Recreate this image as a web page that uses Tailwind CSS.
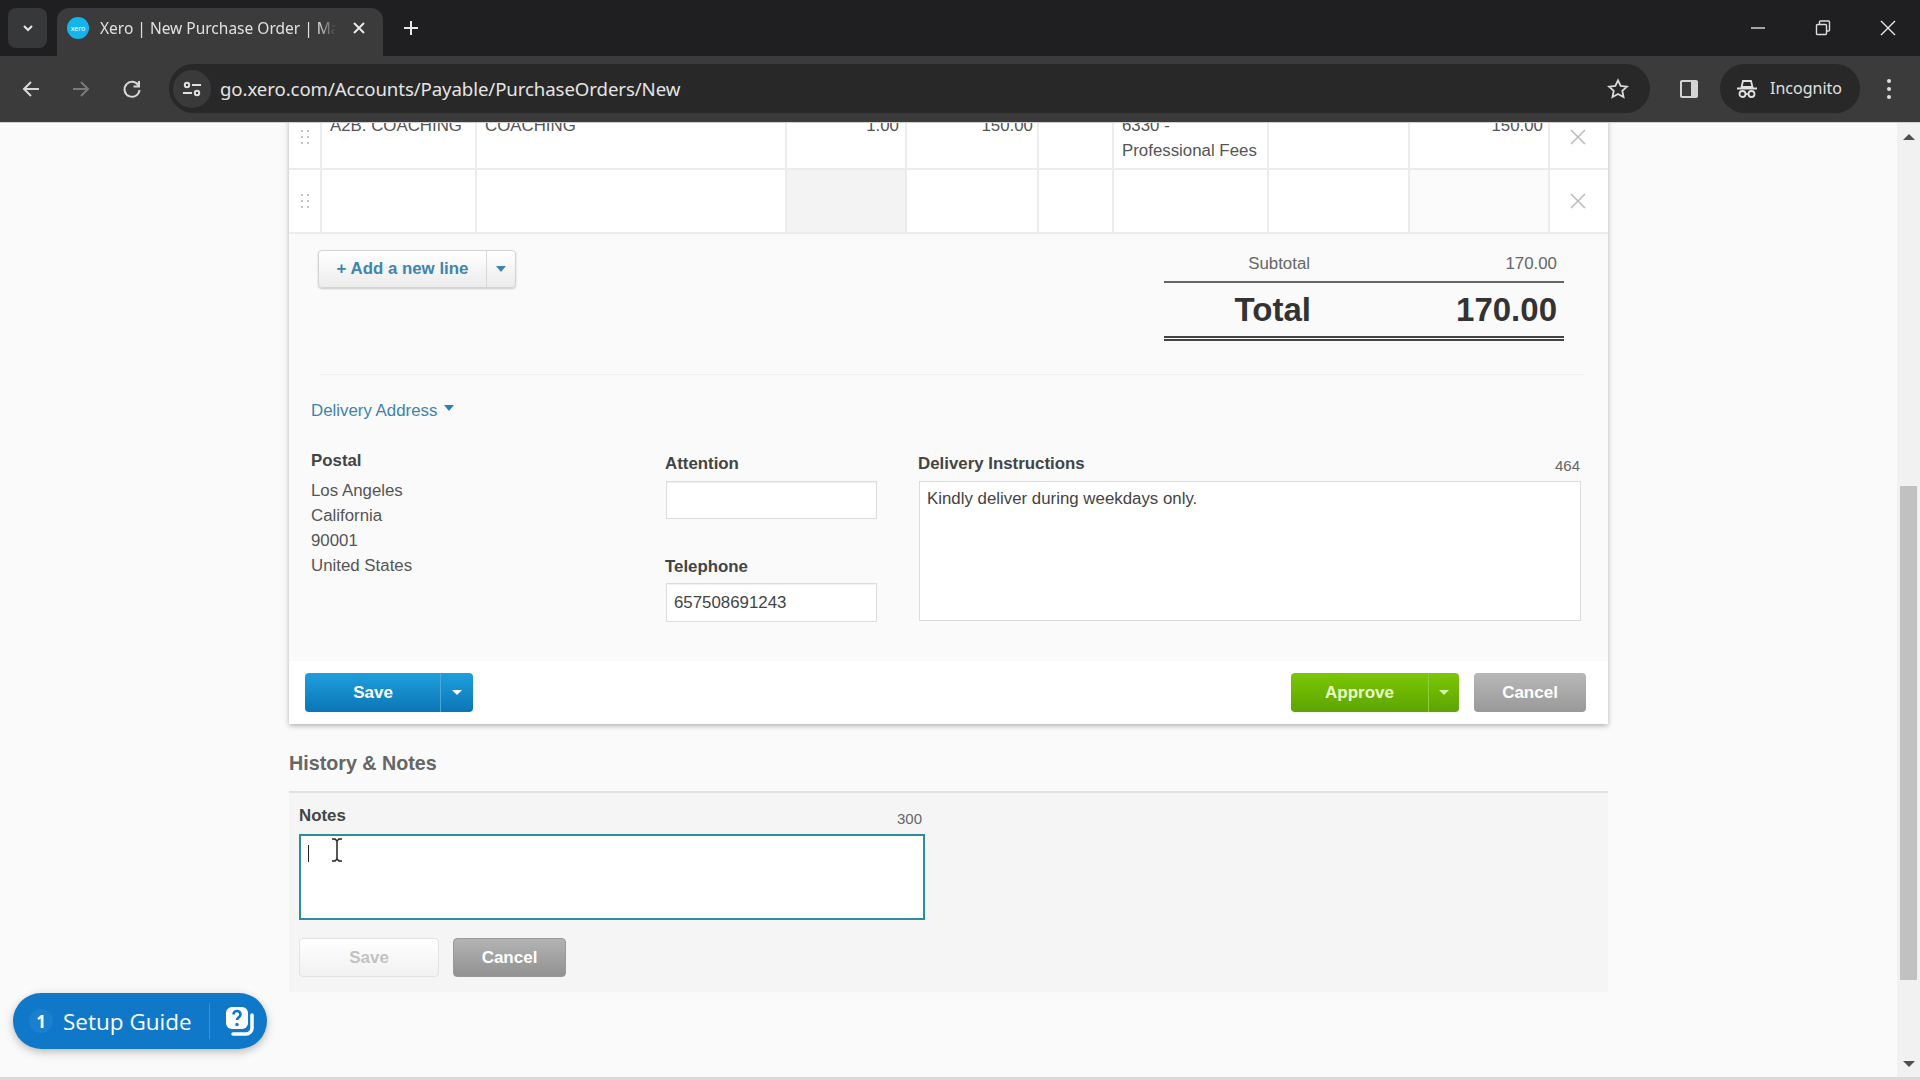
<!DOCTYPE html>
<html lang="en">
<head>
    <meta charset="utf-8"/>
    <title>Xero | New Purchase Order</title>
    <script src="https://cdn.jsdelivr.net/npm/@tailwindcss/browser@4"></script>
</head>
<body class="w-[1920px] h-[1080px] overflow-hidden flex flex-col bg-[#fafafa] text-[16.85px] leading-[25px] text-[#555] font-['Liberation_Sans',Arial,sans-serif]">

    <!-- Tab strip -->
    <div class="h-14 bg-[#1f1f21] flex items-start pt-2 pl-2 font-['Noto_Sans',sans-serif] text-[#e0e0e0] shrink-0">
        <div class="w-[39px] h-10 rounded-lg bg-[#37383a] flex items-center justify-center">
            <svg width="14" height="14" viewBox="0 0 14 14" fill="none" stroke="#e8e8e8" stroke-width="2"><path d="M3 5l4 4 4-4"/></svg>
        </div>
        <div class="ml-[10px] w-[326px] h-12 rounded-t-xl bg-[#3b3b3b] flex items-center pl-[10px] pb-2">
            <div class="w-[22px] h-[22px] rounded-full bg-[#13b5ea] flex items-center justify-center text-[7px] leading-none text-white">xero</div>
            <span class="ml-[11px] w-[236px] whitespace-nowrap overflow-hidden text-[15.5px] [mask-image:linear-gradient(to_right,black_92%,transparent)]">Xero | New Purchase Order | Manage</span>
            <svg class="ml-[16px]" width="14" height="14" viewBox="0 0 14 14" fill="none" stroke="#e8e8e8" stroke-width="2"><path d="M2 2l10 10M12 2L2 12"/></svg>
        </div>
        <svg class="ml-[20px] mt-[12px]" width="16" height="16" viewBox="0 0 16 16" fill="none" stroke="#e8e8e8" stroke-width="2"><path d="M8 1v14M1 8h14"/></svg>
        <div class="ml-auto flex items-center h-10">
            <svg class="mr-[49px]" width="16" height="16" viewBox="0 0 16 16" fill="none" stroke="#ddd" stroke-width="1.4"><path d="M1 8h14"/></svg>
            <svg class="mr-[49px]" width="16" height="16" viewBox="0 0 16 16" fill="none" stroke="#ddd" stroke-width="1.4"><rect x="1.5" y="4.5" width="10" height="10" rx="1"/><path d="M4.5 4.5V2a1 1 0 011-1h8a1 1 0 011 1v8a1 1 0 01-1 1h-2"/></svg>
            <svg class="mr-6" width="16" height="16" viewBox="0 0 16 16" fill="none" stroke="#e8e8e8" stroke-width="1.4"><path d="M1 1l14 14M15 1L1 15"/></svg>
        </div>
    </div>

    <!-- Toolbar -->
    <div class="h-[67px] bg-[#3b3b3b] border-b border-[#cfcfcf] flex items-start pt-2 shrink-0 font-['Noto_Sans',sans-serif]">
        <div class="w-[169px] h-[49px] flex items-center">
            <svg class="ml-[22px]" width="18" height="18" viewBox="0 0 18 18" fill="none" stroke="#d8d8d8" stroke-width="2"><path d="M17 9H2M9 2L2 9l7 7"/></svg>
            <svg class="ml-[32px]" width="18" height="18" viewBox="0 0 18 18" fill="none" stroke="#7a7a7a" stroke-width="2"><path d="M1 9h15M9 2l7 7-7 7"/></svg>
            <svg class="ml-[32px]" width="20" height="20" viewBox="0 0 20 20" fill="none" stroke="#d8d8d8" stroke-width="2"><path d="M16.5 6.5A7.5 7.5 0 1017.5 11"/><path d="M17 2v5.5h-5.5" /></svg>
        </div>
        <div class="w-[1481px] h-[49px] rounded-full bg-[#282828] flex items-center">
            <div class="w-[38px] h-[38px] ml-[4px] rounded-full bg-[#3a3a3a] flex items-center justify-center">
                <svg width="20" height="18" viewBox="0 0 20 18" fill="none" stroke="#e0e0e0" stroke-width="2"><circle cx="5" cy="5" r="2.2"/><path d="M10 5h9M1 13h9"/><circle cx="15" cy="13" r="2.2"/></svg>
            </div>
            <span class="ml-[9px] text-[18.65px] tracking-[-0.1px] text-[#e4e4e4] whitespace-nowrap">go.xero.com/Accounts/Payable/PurchaseOrders/New</span>
            <svg class="ml-auto mr-[21px]" width="22" height="22" viewBox="0 0 24 24" fill="none" stroke="#d8d8d8" stroke-width="2"><path d="M12 2.5l2.9 6.2 6.8.8-5 4.6 1.3 6.7-6-3.3-6 3.3 1.3-6.7-5-4.6 6.8-.8z"/></svg>
        </div>
        <div class="w-[70px] h-[49px] flex items-center justify-center pl-2">
            <svg width="20" height="20" viewBox="0 0 20 20"><rect x="1" y="1" width="18" height="18" rx="2" fill="#d4d4d4"/><rect x="3" y="3" width="9" height="14" fill="#3b3b3b"/></svg>
        </div>
        <div class="w-[140px] h-[49px] rounded-full bg-[#282828] flex items-center pl-[17px] text-[16px] text-[#e0e0e0]">
            <svg width="20" height="20" viewBox="0 0 20 20" fill="none" stroke="#e0e0e0" stroke-width="1.8"><path d="M6 2h8l1.5 6h-11zM0 9.5h20" /><circle cx="5.5" cy="15" r="3"/><circle cx="14.5" cy="15" r="3"/><path d="M8.5 15h3"/></svg>
            <span class="ml-[13px]">Incognito</span>
        </div>
        <div class="ml-[27px] h-[49px] flex flex-col items-center justify-center gap-[4px]">
            <div class="w-1 h-1 rounded-full bg-[#e0e0e0]"></div>
            <div class="w-1 h-1 rounded-full bg-[#e0e0e0]"></div>
            <div class="w-1 h-1 rounded-full bg-[#e0e0e0]"></div>
        </div>
    </div>

    <!-- Page -->
    <div class="relative flex-1 flex overflow-hidden">
        <div class="flex-1 pl-[289px]">
            <div class="w-[1319px]">

                <!-- Card -->
                <div class="bg-[#fafafa] shadow-[0_2px_5px_rgba(0,0,0,0.28)] -mt-[17px]">
                    <!-- Line items -->
                    <div class="grid grid-cols-[33px_155px_310px_120px_132px_75px_155px_141px_140px_58px] h-16 bg-white border-b-2 border-[#ececec]">
                        <div class="border-r-2 border-[#ececec] flex items-center justify-center">
                            <svg width="10" height="16" viewBox="0 0 10 16" fill="#c4c4c4"><rect x="1" y="1" width="2" height="2"/><rect x="7" y="1" width="2" height="2"/><rect x="1" y="7" width="2" height="2"/><rect x="7" y="7" width="2" height="2"/><rect x="1" y="13" width="2" height="2"/><rect x="7" y="13" width="2" height="2"/></svg>
                        </div>
                        <div class="border-r-2 border-[#ececec] pl-2 pt-[7px] whitespace-nowrap">A2B. COACHING</div>
                        <div class="border-r-2 border-[#ececec] pl-2 pt-[7px]">COACHING</div>
                        <div class="border-r-2 border-[#ececec] pr-[6px] pt-[7px] text-right">1.00</div>
                        <div class="border-r-2 border-[#ececec] pr-1 pt-[7px] text-right">150.00</div>
                        <div class="border-r-2 border-[#ececec]"></div>
                        <div class="border-r-2 border-[#ececec] pl-2 pt-[7px]">6330 -<br/><span class="whitespace-nowrap">Professional Fees</span></div>
                        <div class="border-r-2 border-[#ececec]"></div>
                        <div class="border-r-2 border-[#ececec] pr-[5px] pt-[7px] text-right">150.00</div>
                        <div class="flex items-center justify-center pr-[3px]">
                            <svg width="16" height="16" viewBox="0 0 16 16" fill="none" stroke="#bdbdbd" stroke-width="1.6"><path d="M1 1l14 14M15 1L1 15"/></svg>
                        </div>
                    </div>
                    <div class="grid grid-cols-[33px_155px_310px_120px_132px_75px_155px_141px_140px_58px] h-16 bg-white border-b-2 border-[#ececec]">
                        <div class="border-r-2 border-[#ececec] flex items-center justify-center">
                            <svg width="10" height="16" viewBox="0 0 10 16" fill="#c4c4c4"><rect x="1" y="1" width="2" height="2"/><rect x="7" y="1" width="2" height="2"/><rect x="1" y="7" width="2" height="2"/><rect x="7" y="7" width="2" height="2"/><rect x="1" y="13" width="2" height="2"/><rect x="7" y="13" width="2" height="2"/></svg>
                        </div>
                        <div class="border-r-2 border-[#ececec]"></div>
                        <div class="border-r-2 border-[#ececec]"></div>
                        <div class="border-r-2 border-[#ececec] bg-[#f3f3f3]"></div>
                        <div class="border-r-2 border-[#ececec]"></div>
                        <div class="border-r-2 border-[#ececec]"></div>
                        <div class="border-r-2 border-[#ececec]"></div>
                        <div class="border-r-2 border-[#ececec]"></div>
                        <div class="border-r-2 border-[#ececec] bg-[#fbfbfb]"></div>
                        <div class="flex items-center justify-center pr-[3px]">
                            <svg width="16" height="16" viewBox="0 0 16 16" fill="none" stroke="#bdbdbd" stroke-width="1.6"><path d="M1 1l14 14M15 1L1 15"/></svg>
                        </div>
                    </div>

                    <!-- Add line and totals -->
                    <div class="h-[140px] flex justify-between pl-[29px] pr-[44px] pt-4">
                        <div class="flex h-[38px] w-[198px] rounded-sm border border-[#d4d4d4] bg-linear-to-b from-white to-[#ececec] shadow-[0_1px_2px_rgba(0,0,0,0.2)] font-bold text-[#3d86ad]">
                            <div class="flex-1 text-center leading-[35px] border-r border-[#d8d8d8]">+ Add a new line</div>
                            <div class="w-[28px] flex items-center justify-center">
                                <div class="w-0 h-0 border-x-[5px] border-x-transparent border-t-[6px] border-t-[#3d86ad]"></div>
                            </div>
                        </div>
                        <div class="w-[400px]">
                            <div class="flex h-[33px] pt-[1px] pr-[7px] border-b-2 border-[#666] text-[#666]">
                                <div class="w-[146px] text-right">Subtotal</div>
                                <div class="flex-1 text-right">170.00</div>
                            </div>
                            <div class="flex h-[58px] items-center pr-[7px] border-b-[5px] border-double border-[#444] text-[33px] font-bold text-[#333]">
                                <div class="w-[147px] text-right">Total</div>
                                <div class="flex-1 text-right">170.00</div>
                            </div>
                        </div>
                    </div>
                    <div class="ml-[31px] mr-[23px] h-px bg-[#f1f1f1]"></div>

                    <!-- Delivery -->
                    <div class="h-[286px] pl-[22px] pt-[23px]">
                        <div class="flex items-center text-[#3f83a8]">Delivery Address
                            <div class="ml-[7px] -mt-[5px] w-0 h-0 border-x-[5px] border-x-transparent border-t-[6px] border-t-[#2b7fb0]"></div>
                        </div>
                        <div class="flex mt-[25px]">
                            <div class="w-[354px]">
                                <div class="font-bold text-[#444]">Postal</div>
                                <div class="mt-[5px]">Los Angeles</div>
                                <div>California</div>
                                <div>90001</div>
                                <div>United States</div>
                            </div>
                            <div class="w-[211px] pt-[3px] font-bold text-[#444]">
                                <label class="block">Attention</label>
                                <input class="block mt-[5px] ml-px w-[211px] h-[38px] bg-white border border-[#dcdcdc] shadow-[inset_0_1px_1px_rgba(0,0,0,0.06)]" type="text"/>
                                <label class="block mt-[35px]">Telephone</label>
                                <input class="block mt-1 ml-px w-[211px] h-[39px] px-[7px] bg-white border border-[#dcdcdc] shadow-[inset_0_1px_1px_rgba(0,0,0,0.06)] font-normal text-[#444]" type="text" value="657508691243"/>
                            </div>
                            <div class="ml-[42px] w-[662px] pt-[3px]">
                                <div class="flex justify-between items-end">
                                    <label class="font-bold text-[#444]">Delivery Instructions</label>
                                    <span class="text-[15px] text-[#666] translate-y-[2px]">464</span>
                                </div>
                                <textarea class="block mt-[5px] ml-px w-[662px] h-[140px] px-[7px] py-[4px] bg-white border border-[#dcdcdc] text-[#444] resize-none">Kindly deliver during weekdays only.</textarea>
                            </div>
                        </div>
                    </div>

                    <!-- Actions -->
                    <div class="h-[63px] bg-white flex pt-3 pl-4 pr-[22px] font-bold text-[17px] text-white">
                        <div class="flex w-[168px] h-[39px] rounded-sm bg-linear-to-b from-[#1f9fdc] to-[#0b76b6]">
                            <div class="w-[136px] pl-px leading-[39px] text-center border-r border-[#4aa8d6]">Save</div>
                            <div class="flex-1 flex items-center justify-center">
                                <div class="w-0 h-0 border-x-[5px] border-x-transparent border-t-[5px] border-t-white"></div>
                            </div>
                        </div>
                        <div class="flex w-[168px] h-[39px] ml-auto rounded-sm bg-linear-to-b from-[#7cc704] to-[#5da402] text-[#e9ffc8]">
                            <div class="w-[138px] leading-[39px] text-center border-r border-[#8fce3a]">Approve</div>
                            <div class="flex-1 flex items-center justify-center">
                                <div class="w-0 h-0 border-x-[5px] border-x-transparent border-t-[5px] border-t-[#d5f5a5]"></div>
                            </div>
                        </div>
                        <div class="w-[112px] h-[39px] ml-[15px] rounded-sm bg-linear-to-b from-[#b8b8b8] to-[#999] leading-[39px] text-center">Cancel</div>
                    </div>
                </div>

                <!-- History and notes -->
                <h2 class="mt-[25px] h-[42px] text-[19.7px] leading-[28px] font-bold text-[#666]">History &amp; Notes</h2>
                <div class="h-[201px] border-t-2 border-[#e2e2e2] bg-[#f5f5f5] pl-[10px] pt-[10px]">
                    <div class="flex justify-between items-end w-[623px]">
                        <label class="font-bold text-[#444]">Notes</label>
                        <span class="text-[15px] text-[#666] translate-y-[3px]">300</span>
                    </div>
                    <div class="mt-[6px] w-[626px] h-[86px] bg-white border-2 border-[#2e8c9c] pl-[7px] pt-[9px]">
                        <div class="w-px h-[17px] bg-[#222]"></div>
                    </div>
                    <div class="mt-[18px] flex font-bold text-[17px]">
                        <div class="w-[140px] h-[39px] rounded-sm border border-[#e2e2e2] bg-linear-to-b from-white to-[#f1f1f1] leading-[37px] text-center text-[#c2c2c2]">Save</div>
                        <div class="w-[113px] h-[39px] ml-[14px] rounded-sm border border-[#999] bg-linear-to-b from-[#b4b4b4] to-[#919191] leading-[37px] text-center text-white">Cancel</div>
                    </div>
                </div>
            </div>
        </div>

        <!-- Scrollbar -->
        <div class="w-[23px] bg-[#f1f1f1] flex flex-col items-center shrink-0">
            <div class="h-6 flex items-center">
                <div class="mt-1 w-0 h-0 border-x-[6px] border-x-transparent border-b-[6px] border-b-[#505050]"></div>
            </div>
            <div class="h-[339px]"></div>
            <div class="w-[17px] h-[494px] bg-[#c1c1c1]"></div>
            <div class="flex-1"></div>
            <div class="h-6 flex items-center">
                <div class="-mt-[2px] w-0 h-0 border-x-[6px] border-x-transparent border-t-[6px] border-t-[#505050]"></div>
            </div>
        </div>

        <!-- Text cursor over the notes box -->
        <svg class="absolute left-[331px] top-[715px]" width="12" height="24" viewBox="0 0 12 24" fill="none" stroke="#222" stroke-width="1.5"><path d="M1 1h3l2 2 2-2h3M6 3v18M1 23h3l2-2 2 2h3"/></svg>

        <!-- Setup guide -->
        <div class="absolute left-[13px] top-[870px] w-[254px] h-[56px] rounded-full bg-[#0f78c8] shadow-[0_3px_8px_rgba(0,0,0,0.25)] flex items-center text-white font-['Open_Sans',sans-serif]">
            <div class="ml-[16px] w-[24px] h-[24px] rounded-full bg-[#1a80cd] flex items-center justify-center text-[17px] font-bold">1</div>
            <span class="ml-[10px] w-[130px] text-[22.5px] font-medium whitespace-nowrap">Setup Guide</span>
            <div class="ml-[16px] w-px h-[36px] bg-[#3a92d6]"></div>
            <svg class="ml-[15px]" width="30" height="30" viewBox="0 0 30 30"><rect x="1" y="1" width="22" height="22" rx="6" fill="white"/><path d="M27 9v13a6 6 0 01-6 6H8" fill="none" stroke="white" stroke-width="3.5" stroke-linecap="round"/><path d="M8.5 8.5a3.5 3.5 0 117 0c0 2.5-3.5 2.8-3.5 5.5" fill="none" stroke="#0f78c8" stroke-width="2.6"/><circle cx="12" cy="18.5" r="1.7" fill="#0f78c8"/></svg>
        </div>
    </div>

    <!-- Edge of the screen below the page -->
    <div class="h-[3px] bg-[#d9d9d9] shrink-0"></div>
</body>
</html>
